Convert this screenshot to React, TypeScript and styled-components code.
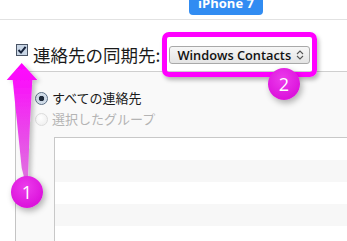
import React from "react";
import styled, { createGlobalStyle } from "styled-components";

const Global = createGlobalStyle`
  html, body { margin: 0; padding: 0; background: #fff; }
  body { width: 347px; height: 241px; overflow: hidden; font-family: "Noto Sans CJK JP", "Noto Sans", sans-serif; }
`;

const Page = styled.div`
  position: relative;
  width: 347px;
  height: 241px;
  overflow: hidden;
  background: #fff;
`;

const Header = styled.div`
  height: 19px;
  border-bottom: 1px solid #e2e2e2;
  display: flex;
  align-items: flex-end;
  padding-left: 189px;
`;

const DeviceTab = styled.div`
  width: 74px;
  height: 24px;
  margin-bottom: 4px;
  border-radius: 4px;
  background: #318cf2;
  color: #fff;
  font-family: "Open Sans", "Liberation Sans", sans-serif;
  font-weight: 700;
  font-size: 13px;
  line-height: 20px;
  display: flex;
  align-items: center;
  justify-content: center;
`;

const SyncRow = styled.div`
  display: flex;
  align-items: center;
  height: 18px;
  margin-top: 26px;
  padding-left: 16px;
`;

const CheckBox = styled.svg`
  align-self: flex-start;
  margin-top: -2px;
  flex: none;
`;

const SyncLabel = styled.span`
  margin-left: 5px;
  font-size: 17.5px;
  line-height: 18px;
  color: #1a1a1a;
  white-space: nowrap;
`;

const Select = styled.div`
  margin-left: 9px;
  width: 141px;
  height: 18px;
  box-sizing: border-box;
  border: 1px solid #a9a9a9;
  border-radius: 3px;
  background: linear-gradient(#f7f7f7, #e4e4e4);
  display: flex;
  align-items: center;
  padding: 0 5px 0 7px;
  font-family: "Open Sans", "Liberation Sans", sans-serif;
  font-weight: 600;
  font-size: 12.8px;
  color: #111;
  white-space: nowrap;
`;

const SelectText = styled.span`
  flex: 1;
`;

const Panel = styled.div`
  margin-top: 7px;
  margin-left: 15px;
  height: 200px;
  border-top: 1px solid #cfcfcf;
  border-left: 1px solid #c4c4c4;
  background: #f9f9f9;
  padding-top: 19px;
  display: flex;
  flex-direction: column;
`;

const RadioRow = styled.label<{ $disabled?: boolean }>`
  display: flex;
  align-items: center;
  height: 14px;
  padding-left: 19px;
  margin-bottom: 7px;
  font-size: 13px;
  line-height: 14px;
  color: ${(p) => (p.$disabled ? "#b4b4b4" : "#1a1a1a")};
  white-space: nowrap;
`;

const RadioDot = styled.span<{ $on?: boolean; $disabled?: boolean }>`
  width: 13px;
  height: 13px;
  box-sizing: border-box;
  border-radius: 50%;
  margin-right: 4px;
  flex: none;
  border: 1px solid ${(p) => (p.$disabled ? "#dcdcdc" : "#5a6e86")};
  background: ${(p) =>
    p.$disabled
      ? "radial-gradient(circle at 40% 35%, #ffffff, #ececec)"
      : "radial-gradient(circle, #1f2a3a 0 2.5px, #c9d6e4 3px, #e9eef4 100%)"};
`;

const ListBox = styled.div`
  margin-top: 4px;
  margin-left: 38px;
  border-top: 1px solid #c8c8c8;
  border-left: 1px solid #c8c8c8;
  background: #fff;
  flex: 1;
`;

const ListRow = styled.div<{ $alt?: boolean }>`
  height: 22px;
  background: ${(p) => (p.$alt ? "#f7f7f7" : "#fff")};
`;

const Highlight = styled.div`
  position: absolute;
  left: 162px;
  top: 32px;
  width: 155px;
  height: 45px;
  box-sizing: border-box;
  border: 5px solid #ff00ff;
  border-radius: 7px;
  box-shadow: 2px 3px 4px rgba(0, 0, 0, 0.28);
`;

const Badge = styled.div<{ $x: number; $y: number }>`
  position: absolute;
  left: ${(p) => p.$x - 16}px;
  top: ${(p) => p.$y - 16}px;
  width: 32px;
  height: 32px;
  border-radius: 50%;
  background: radial-gradient(circle at 45% 35%, #ec3cec, #dc14dc 70%);
  box-shadow: 2px 3px 6px rgba(0, 0, 0, 0.3);
  color: #fff;
  font-family: "Open Sans", "Liberation Sans", sans-serif;
  font-size: 18px;
  line-height: 32px;
  text-align: center;
`;

const Arrow = styled.svg`
  position: absolute;
  left: 0;
  top: 55px;
`;

export default function App() {
  return (
    <Page>
      <Global />
      <Header>
        <DeviceTab>iPhone 7</DeviceTab>
      </Header>
      <SyncRow>
        <CheckBox width="12" height="12" viewBox="0 0 12 12">
          <rect x="0.5" y="0.5" width="11" height="11" fill="#c9d6e6" stroke="#4a5566" />
          <path d="M2.5 6 L5 8.6 L9.6 2.8" fill="none" stroke="#16223a" strokeWidth="2" />
        </CheckBox>
        <SyncLabel>連絡先の同期先:</SyncLabel>
        <Select>
          <SelectText>Windows Contacts</SelectText>
          <svg width="8" height="10" viewBox="0 0 8 10">
            <path d="M1 4 L4 1 L7 4 M1 6 L4 9 L7 6" fill="none" stroke="#555" strokeWidth="1.1" />
          </svg>
        </Select>
      </SyncRow>
      <Panel>
        <RadioRow>
          <RadioDot $on />
          すべての連絡先
        </RadioRow>
        <RadioRow $disabled>
          <RadioDot $disabled />
          選択したグループ
        </RadioRow>
        <ListBox>
          <ListRow />
          <ListRow $alt />
          <ListRow />
          <ListRow $alt />
          <ListRow />
        </ListBox>
      </Panel>

      <Arrow width="50" height="125" viewBox="0 0 50 125">
        <defs>
          <linearGradient id="arrowFill" x1="0" y1="0" x2="0" y2="1">
            <stop offset="0" stopColor="#ff00ff" />
            <stop offset="0.55" stopColor="#ec40ec" />
            <stop offset="1" stopColor="#e070e0" />
          </linearGradient>
          <filter id="arrowShadow" x="-50%" y="-20%" width="200%" height="140%">
            <feDropShadow dx="3" dy="2" stdDeviation="2" floodColor="#000" floodOpacity="0.22" />
          </filter>
        </defs>
        <path
          d="M21.7 8 L37.3 25 L32.3 25 L30 67 L28.3 113 L28 122 L24 122 L21.7 113 L17 67 L12.7 25 L6.7 25 Z"
          fill="url(#arrowFill)"
          filter="url(#arrowShadow)"
        />
      </Arrow>
      <Highlight />
      <Badge $x={284} $y={84}>2</Badge>
      <Badge $x={27} $y={192}>1</Badge>
    </Page>
  );
}
